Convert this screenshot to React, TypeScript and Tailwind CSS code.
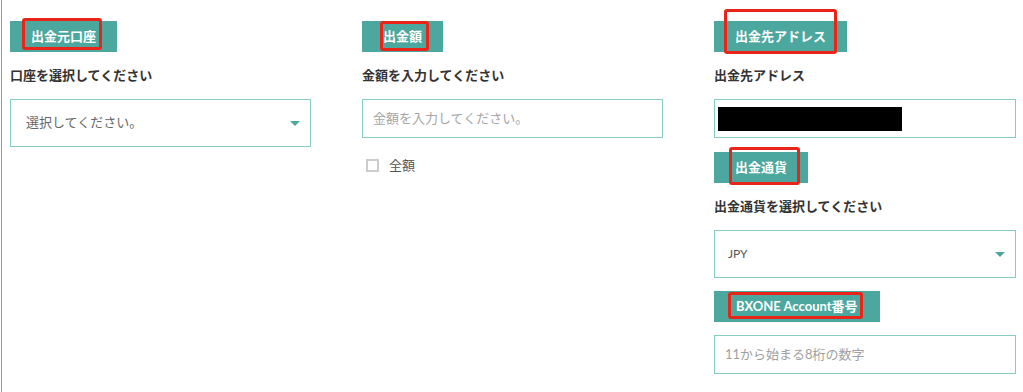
import React from 'react';

// 注釈用の赤枠
const Mark: React.FC<{ className: string }> = ({ className }) => (
  <span className={`absolute border-[3px] border-[#ea2418] rounded-[3px] ${className}`} />
);

const Badge: React.FC<{ label: string; mark: string; className?: string }> = ({ label, mark, className = '' }) => (
  <div className={`relative inline-flex h-[31px] items-center self-start bg-[#4ca89e] px-[21px] text-[13px] font-bold text-white ${className}`}>
    {label}
    <Mark className={mark} />
  </div>
);

const Label: React.FC<{ children: React.ReactNode }> = ({ children }) => (
  <p className="mt-[13px] mb-[14px] h-[20px] text-[13px] font-bold leading-[20px] text-[#333]">{children}</p>
);

const Caret = () => (
  <svg width="10" height="5" viewBox="0 0 10 5" className="shrink-0">
    <path d="M0 0h10L5 5z" fill="#4ca89e" />
  </svg>
);

const SelectBox: React.FC<{ value: string; className?: string }> = ({ value, className = '' }) => (
  <div className={`flex h-[48px] items-center justify-between border border-[#85ccc3] pr-[10px] ${className}`}>
    <span>{value}</span>
    <Caret />
  </div>
);

export default function App() {
  return (
    <div
      className="min-h-[392px] border-l border-[#9a9a9a] ml-[1px] bg-white"
      style={{ fontFamily: 'Lato, "Noto Sans CJK JP", sans-serif' }}
    >
      <div className="flex gap-[51px] pl-[8px] pt-[21px]">
        {/* 出金元口座 */}
        <div className="flex w-[301px] flex-col">
          <Badge label="出金元口座" mark="left-[12px] top-[-3px] w-[80px] h-[32px]" />
          <Label>口座を選択してください</Label>
          <SelectBox value="選択してください。" className="pl-[15px] text-[13px] text-[#666]" />
        </div>

        {/* 出金額 */}
        <div className="flex w-[301px] flex-col">
          <Badge label="出金額" mark="left-[18px] top-0 w-[49px] h-[30px]" />
          <Label>金額を入力してください</Label>
          <div className="flex h-[39px] items-center border border-[#85ccc3] pl-[10px] text-[13px] text-[#a5a5a5]">
            金額を入力してください。
          </div>
          <label className="mt-[18px] ml-[4px] flex items-center gap-[10px] text-[13px] text-[#555]">
            <span className="h-[13px] w-[13px] border-2 border-[#cccccc]" />
            全額
          </label>
        </div>

        {/* 出金先アドレス */}
        <div className="flex w-[302px] flex-col">
          <Badge label="出金先アドレス" mark="left-[10px] top-[-12px] w-[113px] h-[45px]" />
          <Label>出金先アドレス</Label>
          <div className="flex h-[39px] items-center border border-[#85ccc3] pl-[3px]">
            <span className="h-[24px] w-[184px] bg-black" />
          </div>

          <Badge label="出金通貨" mark="left-[15px] top-[-5px] w-[71px] h-[38px]" className="mt-[14px]" />
          <Label>出金通貨を選択してください</Label>
          <SelectBox value="JPY" className="pl-[13px] text-[12px] text-[#555]" />

          <Badge label="BXONE Account番号" mark="left-[14px] top-[1px] w-[135px] h-[27px]" className="mt-[13px] px-[22px]" />
          <div className="mt-[13px] flex h-[39px] items-center border border-[#85ccc3] pl-[10px] text-[13px] text-[#a0a0a0]">
            11から始まる8桁の数字
          </div>
        </div>
      </div>
    </div>
  );
}
